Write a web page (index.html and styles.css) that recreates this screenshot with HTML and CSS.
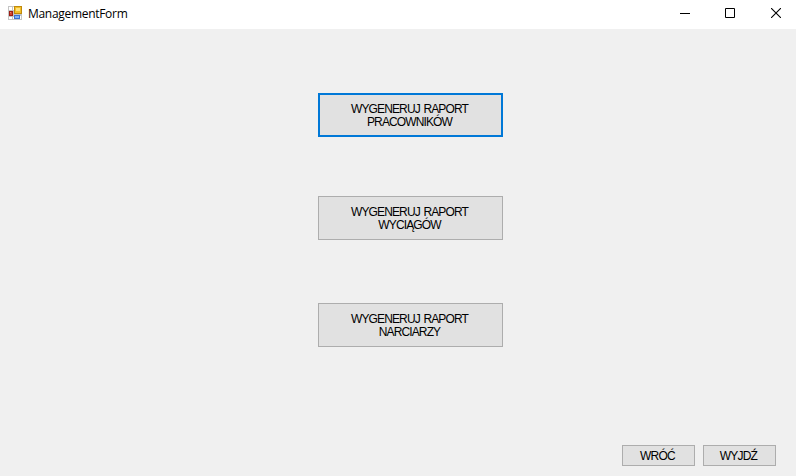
FILE: index.html
```html
<!DOCTYPE html>
<html lang="pl">
<head>
<meta charset="utf-8">
<title>ManagementForm</title>
<link rel="stylesheet" href="styles.css">
</head>
<body>
<div class="window">
  <header class="titlebar">
    <svg class="app-icon" width="16" height="16" viewBox="0 0 16 16" shape-rendering="crispEdges">
      <path fill="#c4c4c4" d="M0 0h14v14H0z"/>
      <path fill="#fff" d="M1 1h3v3H1zM5 1h1v3H5zM1 11h3v2H1zM5 11h1v2H5zM12 10h1v3h-1z"/>
      <path fill="#9c1c14" d="M1 5h4v5H1z"/>
      <path fill="#d2432f" d="M2 6h2v3H2z"/>
      <path fill="#ec8b72" d="M2 6h1v1H2z"/>
      <path fill="#c08a0c" d="M6 0h8v8H6z"/>
      <path fill="#f1bd27" d="M7 1h6v6H7z"/>
      <path fill="#ffe27a" d="M8 2h4v3H8z"/>
      <path fill="#3a72d0" d="M6 9h6v4H6z"/>
      <path fill="#7fb0f7" d="M7 10h4v2H7z"/>
    </svg>
    <h1 class="title">ManagementForm</h1>
    <div class="controls">
      <svg width="10" height="10" shape-rendering="crispEdges"><path d="M0 5h10v1H0z"/></svg>
      <svg width="10" height="10"><path d="M.5.5h9v9h-9z" fill="none" stroke="#000"/></svg>
      <svg width="10" height="10"><path d="M0 0l10 10M10 0L0 10" stroke="#000" stroke-width="1.1"/></svg>
    </div>
  </header>
  <main class="form">
    <div class="reports">
      <button class="btn report focused"><span>WYGENERUJ RAPORT</span><span>PRACOWNIKÓW</span></button>
      <button class="btn report"><span>WYGENERUJ RAPORT</span><span>WYCIĄGÓW</span></button>
      <button class="btn report"><span>WYGENERUJ RAPORT</span><span>NARCIARZY</span></button>
    </div>
    <footer class="actions">
      <button class="btn small">WRÓĆ</button>
      <button class="btn small">WYJDŹ</button>
    </footer>
  </main>
</div>
</body>
</html>
```

FILE: styles.css
```css
* { box-sizing: border-box; }
body { margin: 0; }
.window {
  width: 796px;
  height: 476px;
  display: flex;
  flex-direction: column;
  background: #f0f0f0;
  overflow: hidden;
}
.titlebar {
  height: 29px;
  flex: none;
  display: flex;
  align-items: flex-start;
  padding: 0 15px 0 8px;
  background: #fff;
}
.app-icon { margin-top: 6px; }
.title {
  margin: 5px 0 0 4px;
  font: 400 12px/17px "Open Sans", "Noto Sans", sans-serif;
  letter-spacing: -0.3px;
  color: #000;
}
.controls {
  margin: 8px 0 0 auto;
  display: flex;
  gap: 35px;
}
.controls svg { display: block; }
.controls svg:last-child { margin-left: 1px; }
.form {
  flex: 1;
  display: flex;
  flex-direction: column;
  justify-content: space-between;
  padding: 64px 20px 10px;
}
.reports {
  width: 185px;
  margin-left: 298px;
  display: grid;
  grid-template-rows: 44px 44px 44px;
  row-gap: 59px;
}
.report:last-child { margin-top: 4px; height: 44px; }
.btn {
  display: flex;
  align-items: center;
  justify-content: center;
  margin: 0;
  padding: 2px 2px 0 0;
  border: 1px solid #adadad;
  border-radius: 0;
  background: #e1e1e1;
  color: #000;
  font: 12px/13px "Liberation Sans", Arial, sans-serif;
  letter-spacing: -0.88px;
  word-spacing: 1.2px;
}
.report { flex-direction: column; }
.focused { border: 2px solid #0078d7; }
.actions {
  display: flex;
  justify-content: flex-end;
  gap: 8px;
}
.small { width: 73px; height: 21px; letter-spacing: -0.8px; }
```
